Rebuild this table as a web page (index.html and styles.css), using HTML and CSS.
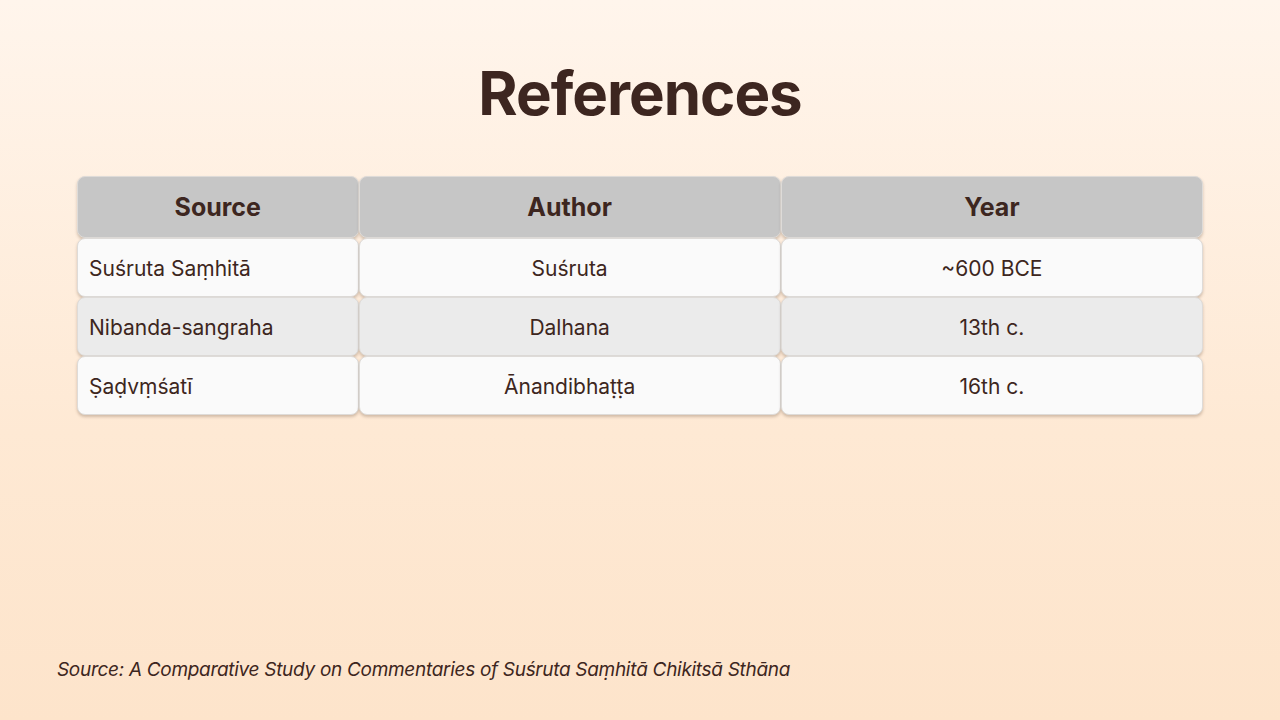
FILE: index.html
```html
<!DOCTYPE html>
<html lang="en">
<head>
<meta charset="utf-8">
<title>References</title>
<link rel="stylesheet" href="styles.css">
</head>
<body>
<main class="slide">
  <h1 class="title">References</h1>
  <table class="refs">
    <colgroup>
      <col class="c1"><col class="c2"><col class="c3">
    </colgroup>
    <thead>
      <tr>
        <th>Source</th>
        <th>Author</th>
        <th>Year</th>
      </tr>
    </thead>
    <tbody>
      <tr class="odd">
        <td class="left">Suśruta Saṃhitā</td>
        <td>Suśruta</td>
        <td>~600 BCE</td>
      </tr>
      <tr class="even">
        <td class="left">Nibanda-sangraha</td>
        <td>Dalhana</td>
        <td>13th c.</td>
      </tr>
      <tr class="odd">
        <td class="left">Ṣaḍvṃśatī</td>
        <td>Ānandibhaṭṭa</td>
        <td>16th c.</td>
      </tr>
    </tbody>
  </table>
  <p class="footnote">Source: A Comparative Study on Commentaries of Suśruta Saṃhitā Chikitsā Sthāna</p>
</main>
</body>
</html>
```

FILE: styles.css
```css
html, body {
  margin: 0;
  padding: 0;
}
body {
  width: 1280px;
  height: 720px;
  overflow: hidden;
  font-family: Inter, "Open Sans", sans-serif;
  color: #3d2620;
  background: linear-gradient(180deg, #fff5ec 0%, #fee9d4 60%, #fde4cb 100%);
}
.slide {
  box-sizing: border-box;
  height: 720px;
  display: flex;
  flex-direction: column;
  padding: 57px 77px 38px 77px;
}
.title {
  margin: 0;
  text-align: center;
  font-size: 60px;
  line-height: 72px;
  font-weight: 700;
  letter-spacing: -1px;
}
.refs {
  margin-top: 47px;
  width: 1126px;
  border-collapse: separate;
  border-spacing: 0;
  table-layout: fixed;
}
.c1 { width: 25%; }
.c2 { width: 37.5%; }
.c3 { width: 37.5%; }
.refs th,
.refs td {
  border: 1px solid #dedbd8;
  border-radius: 8px;
  box-shadow: 0 2px 3px rgba(80, 50, 30, 0.25);
  text-align: center;
  padding: 0 11px;
}
.refs th {
  height: 60px;
  background: #c6c6c6;
  font-size: 25px;
  font-weight: 700;
  letter-spacing: 0;
}
.refs td {
  height: 56px;
  padding-top: 1px;
  font-size: 21px;
  font-weight: 400;
  letter-spacing: 0;
}
.refs tr.odd td { background: #fafafa; }
.refs tr.even td { background: #ebebeb; }
.refs td.left { text-align: left; }
.footnote {
  margin: auto 0 0 -20px;
  font-size: 19px;
  line-height: 24px;
  font-style: italic;
  letter-spacing: -0.3px;
}
```
